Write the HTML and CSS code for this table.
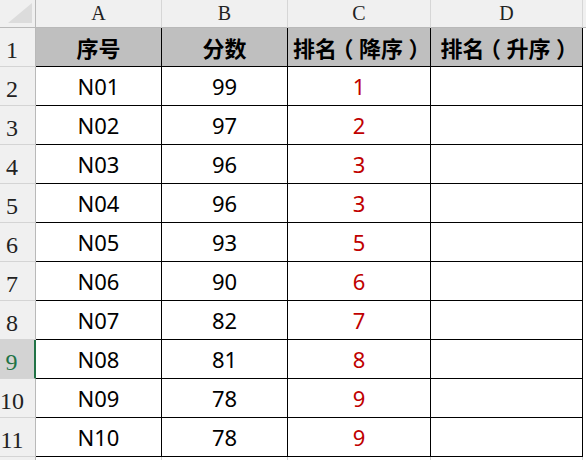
FILE: index.html
```html
<!DOCTYPE html>
<html lang="zh">
<head>
<meta charset="utf-8">
<link rel="stylesheet" href="styles.css">
</head>
<body>
<div class="sheet">
  <div class="corner"><svg class="tri" width="36" height="28" viewBox="0 0 36 28"><polygon points="8,23 32,23 32,3" fill="#dcdcdc"/></svg></div>
  <div class="colh">A</div><div class="colh">B</div><div class="colh">C</div><div class="colh">D</div><div class="colh edge"></div>

  <div class="rowh">1</div>
  <div class="cell head">序号</div><div class="cell head">分数</div><div class="cell head">排名<span class="p">（</span>降序<span class="p">）</span></div><div class="cell head">排名<span class="p">（</span>升序<span class="p">）</span></div><div class="rest"></div>

  <div class="rowh">2</div><div class="cell">N01</div><div class="cell">99</div><div class="cell rank">1</div><div class="cell"></div><div class="rest"></div>
  <div class="rowh">3</div><div class="cell">N02</div><div class="cell">97</div><div class="cell rank">2</div><div class="cell"></div><div class="rest"></div>
  <div class="rowh">4</div><div class="cell">N03</div><div class="cell">96</div><div class="cell rank">3</div><div class="cell"></div><div class="rest"></div>
  <div class="rowh">5</div><div class="cell">N04</div><div class="cell">96</div><div class="cell rank">3</div><div class="cell"></div><div class="rest"></div>
  <div class="rowh">6</div><div class="cell">N05</div><div class="cell">93</div><div class="cell rank">5</div><div class="cell"></div><div class="rest"></div>
  <div class="rowh">7</div><div class="cell">N06</div><div class="cell">90</div><div class="cell rank">6</div><div class="cell"></div><div class="rest"></div>
  <div class="rowh">8</div><div class="cell">N07</div><div class="cell">82</div><div class="cell rank">7</div><div class="cell"></div><div class="rest"></div>
  <div class="rowh active">9</div><div class="cell">N08</div><div class="cell">81</div><div class="cell rank">8</div><div class="cell"></div><div class="rest"></div>
  <div class="rowh">10</div><div class="cell">N09</div><div class="cell">78</div><div class="cell rank">9</div><div class="cell"></div><div class="rest"></div>
  <div class="rowh">11</div><div class="cell">N10</div><div class="cell">78</div><div class="cell rank">9</div><div class="cell"></div><div class="rest"></div>

  <div class="rowh"></div><div class="blank"></div><div class="blank"></div><div class="blank"></div><div class="blank"></div><div class="rest"></div>
</div>
</body>
</html>
```

FILE: styles.css
```css
html, body {
  margin: 0;
  padding: 0;
  background: #ffffff;
  overflow: hidden;
}

.sheet {
  display: grid;
  grid-template-columns: 36px 126px 126px 143px 152px 1fr;
  grid-template-rows: 28px repeat(12, 39px);
  width: 586px;
  font-family: "Noto Sans", "Noto Sans CJK SC", sans-serif;
  font-size: 22px;
  color: #000000;
}

.sheet > div {
  box-sizing: border-box;
  min-width: 0;
}

.corner {
  position: relative;
  background: #f0f0f0;
  border-right: 1px solid #b9b9b9;
  border-bottom: 1px solid #b9b9b9;
}

.tri {
  position: absolute;
  left: 0;
  top: 0;
}

.colh {
  background: #f0f0f0;
  border-right: 1px solid #d6d6d6;
  border-bottom: 1px solid #b9b9b9;
  font-family: "Liberation Serif", serif;
  font-size: 20px;
  color: #222222;
  display: flex;
  align-items: flex-end;
  justify-content: center;
  padding-bottom: 4px;
  line-height: 1;
}

.colh.edge {
  border-right: none;
}

.rowh {
  background: #f0f0f0;
  border-right: 1px solid #b9b9b9;
  border-bottom: 1px solid #d4d4d4;
  font-family: "Liberation Serif", serif;
  font-size: 24px;
  color: #222222;
  display: flex;
  align-items: flex-end;
  justify-content: center;
  padding-right: 11px;
  padding-bottom: 4px;
  line-height: 1;
}

.rowh.active {
  background: #d3d3d3;
  color: #217346;
  border-right: 2px solid #217346;
}

.cell {
  border-right: 1px solid #000000;
  border-bottom: 1px solid #000000;
  display: flex;
  align-items: center;
  justify-content: center;
  white-space: nowrap;
  line-height: 1;
}

.cell.head {
  background: #bfbfbf;
  font-family: "Noto Sans CJK SC", sans-serif;
  font-weight: 700;
}

.cell.head .p {
  display: inline-block;
  width: 1em;
  text-align: center;
  font-feature-settings: "halt" 1;
}

.cell.rank {
  color: #c00000;
}

.blank {
  border-right: 1px solid #d4d4d4;
}

.rest {
  background: #ffffff;
}
```
